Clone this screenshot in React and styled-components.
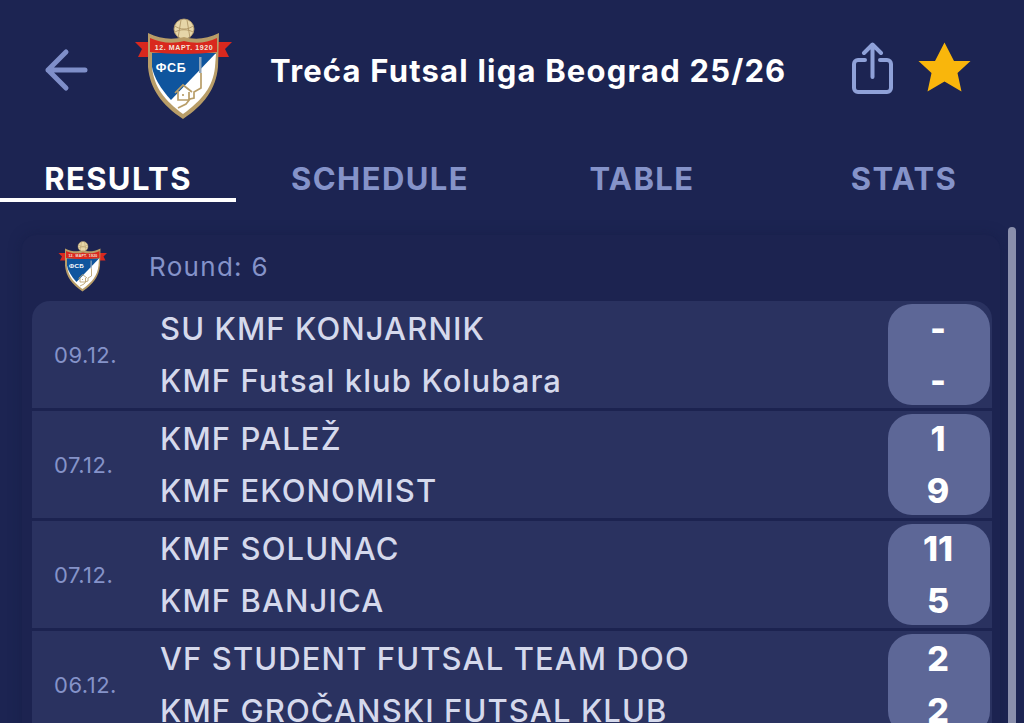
import React from "react";
import styled, { createGlobalStyle } from "styled-components";

const FONT = `Inter, "Open Sans", "Liberation Sans", sans-serif`;

const GlobalStyle = createGlobalStyle`
  html, body {
    margin: 0;
    padding: 0;
    background: #1b2350;
    overflow: hidden;
  }
  * {
    box-sizing: border-box;
  }
`;

const Page = styled.div`
  position: relative;
  width: 1024px;
  height: 723px;
  overflow: hidden;
  background: #1c2452;
  font-family: ${FONT};
`;

const Header = styled.header`
  display: flex;
  align-items: center;
  height: 140px;
  padding-left: 44px;
`;

const BackButton = styled.div`
  display: flex;
  width: 44px;
  height: 44px;
  margin-right: 46px;
`;

const TitleText = styled.h1`
  width: 515px;
  margin: 0 0 0 36px;
  font-size: 31px;
  font-weight: 700;
  letter-spacing: 1.2px;
  white-space: nowrap;
  color: #ffffff;
`;

const Actions = styled.div`
  display: flex;
  align-items: flex-start;
  gap: 25px;
  margin: 0 0 5px 67px;
`;

const Tabs = styled.nav`
  display: grid;
  grid-template-columns: repeat(4, 236px);
  column-gap: 26px;
  height: 62px;
`;

const Tab = styled.div`
  display: flex;
  align-items: center;
  justify-content: center;
  height: 62px;
  padding-top: 18px;
  font-size: 31px;
  font-weight: 700;
  letter-spacing: 1.4px;
  color: ${p => (p.$active ? "#ffffff" : "#8593c9")};
  border-bottom: 4px solid ${p => (p.$active ? "#ffffff" : "transparent")};
`;

const Panel = styled.section`
  margin: 33px 24px 0 22px;
  padding: 0 8px 0 10px;
  border-radius: 14px 14px 0 0;
  background: #1c2350;
  box-shadow: 0 0 14px rgba(18, 24, 62, 0.4);
`;

const RoundBar = styled.div`
  display: flex;
  align-items: center;
  height: 66px;
  padding: 0 0 3px 26px;
`;

const RoundLabel = styled.span`
  margin-left: 41px;
  font-size: 26px;
  font-weight: 400;
  letter-spacing: 1.3px;
  color: #8593c9;
`;

const MatchList = styled.div`
  display: flex;
  flex-direction: column;
  gap: 3px;
`;

const Row = styled.div`
  display: flex;
  align-items: center;
  height: 107px;
  padding-right: 2px;
  background: #2a3260;
  border-radius: ${p => (p.$first ? "18px 18px 0 0" : "0")};
`;

const MatchDate = styled.div`
  width: 128px;
  padding-left: 22px;
  font-size: 22px;
  letter-spacing: 0.5px;
  color: #8593c9;
`;

const Teams = styled.div`
  display: flex;
  flex: 1;
  flex-direction: column;
  gap: 14px;
`;

const Team = styled.div`
  height: 38px;
  font-size: 31px;
  line-height: 38px;
  font-weight: 500;
  letter-spacing: 1.1px;
  white-space: nowrap;
  color: #d5d9ec;
`;

const ScoreBox = styled.div`
  display: flex;
  flex-direction: column;
  gap: 14px;
  width: 102px;
  height: 101px;
  padding: 6px 2px 0 0;
  border-radius: 24px;
  background: #5d6797;
`;

const Score = styled.div`
  height: 38px;
  line-height: 38px;
  font-size: 34px;
  font-weight: 800;
  text-align: center;
  color: #ffffff;
`;

const Scrollbar = styled.div`
  position: absolute;
  top: 227px;
  bottom: -10px;
  left: 1008px;
  width: 8px;
  border-radius: 4px;
  background: #8a8fac;
`;

const CrestSvg = styled.svg`
  display: block;
  flex: none;
  width: ${p => p.$size}px;
  height: ${p => p.$size * 1.04}px;
`;

const Crest = ({ size }) => (
  <CrestSvg $size={size} viewBox="0 0 100 104">
    <circle cx="50" cy="11" r="10" fill="#e6d6a8" stroke="#b89d68" strokeWidth="0.8" />
    <path
      d="M41 8c5 4 13 4 18 0M41 14c5-3 13-3 18 0M47 2l-3 18M53 2l3 18"
      fill="none"
      stroke="#a98f5e"
      strokeWidth="0.8"
    />
    <path d="M1 24h15v15H4l4-8z" fill="#d9281e" />
    <path d="M98 24H83v15h12l-4-8z" fill="#d9281e" />
    <path
      d="M14 15c12 6 24 7 36 4 11 3 23 2 35-4l-1 34c-2 22-14 38-35 52C28 87 16 71 14 49z"
      fill="#b89d68"
    />
    <path d="M18 36h64l-1 13c-2 20-13 33-32 47C30 82 20 69 18 49z" fill="#ffffff" />
    <path d="M18 35h64L37 82C27 71 20 60 18 49z" fill="#0f559e" />
    <path
      d="M16 20c11 5 23 6 34 3 11 3 23 2 33-3v14c-11 1-22 2-33 2s-23-1-34-2z"
      fill="#d9281e"
    />
    <text
      x="50"
      y="32"
      textAnchor="middle"
      fontFamily='"Liberation Sans", sans-serif'
      fontSize="7"
      fontWeight="700"
      letterSpacing="0.6"
      fill="#f4e6dc"
    >
      12. МАРТ. 1920
    </text>
    <text
      x="37"
      y="54"
      textAnchor="middle"
      fontFamily='"Liberation Sans", sans-serif'
      fontSize="12.5"
      fontWeight="700"
      letterSpacing="0.6"
      fill="#ffffff"
    >
      ФСБ
    </text>
    <path d="M65 39h2.500v16H65z" fill="#8ea3b8" />
    <path
      d="M67 55v15l-7 4v6l-4 1-4 5-8 4M41 75l8-8 9 7M44 73v9h11v-8M49 76v2"
      fill="none"
      stroke="#b89d68"
      strokeWidth="1.7"
    />
  </CrestSvg>
);

const matches = [
  { date: "09.12.", home: "SU KMF KONJARNIK", away: "KMF Futsal klub Kolubara", a: "-", b: "-" },
  { date: "07.12.", home: "KMF PALEŽ", away: "KMF EKONOMIST", a: "1", b: "9" },
  { date: "07.12.", home: "KMF SOLUNAC", away: "KMF BANJICA", a: "11", b: "5" },
  { date: "06.12.", home: "VF STUDENT FUTSAL TEAM DOO", away: "KMF GROČANSKI FUTSAL KLUB", a: "2", b: "2" }
];

const tabs = ["RESULTS", "SCHEDULE", "TABLE", "STATS"];

export default function App() {
  return (
    <Page>
      <GlobalStyle />
      <Header>
        <BackButton>
          <svg width="44" height="44" viewBox="0 0 44 44" fill="none" stroke="#7f8fc9" strokeWidth="5" strokeLinecap="round" strokeLinejoin="round">
            <path d="M41 22H4M22 4L4 22l18 18" />
          </svg>
        </BackButton>
        <Crest size={100} />
        <TitleText>Treća Futsal liga Beograd 25/26</TitleText>
        <Actions>
          <svg width="41" height="52" viewBox="0 0 41 52" fill="none" stroke="#8fa1d8" strokeWidth="4" strokeLinecap="round" strokeLinejoin="round">
            <path d="M13 18H6a4 4 0 0 0-4 4v24a4 4 0 0 0 4 4h29a4 4 0 0 0 4-4V22a4 4 0 0 0-4-4h-7" />
            <path d="M20.500 35V3M12 11l8.500-8.500L29 11" />
          </svg>
          <svg width="53" height="50" viewBox="0 0 53 50">
            <path d="M26.500 0.500L36 19h16.500L39.500 31l4 18.500L26.500 39.500 9.500 49.500l4-18.500L0.500 19H17z" fill="#f9b60c" />
          </svg>
        </Actions>
      </Header>
      <Tabs>
        {tabs.map((t, i) => (
          <Tab key={t} $active={i === 0}>
            {t}
          </Tab>
        ))}
      </Tabs>
      <Panel>
        <RoundBar>
          <Crest size={50} />
          <RoundLabel>Round: 6</RoundLabel>
        </RoundBar>
        <MatchList>
          {matches.map((m, i) => (
            <Row key={m.home} $first={i === 0}>
              <MatchDate>{m.date}</MatchDate>
              <Teams>
                <Team>{m.home}</Team>
                <Team>{m.away}</Team>
              </Teams>
              <ScoreBox>
                <Score>{m.a}</Score>
                <Score>{m.b}</Score>
              </ScoreBox>
            </Row>
          ))}
        </MatchList>
      </Panel>
      <Scrollbar />
    </Page>
  );
}
